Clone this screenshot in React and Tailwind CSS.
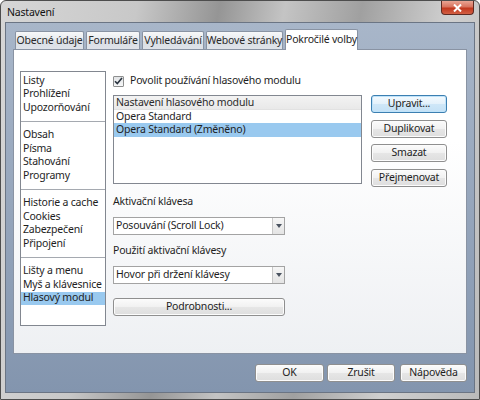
import React from 'react'

const ui = "font-['Noto_Sans',sans-serif] text-[10.5px] tracking-[-0.2px] whitespace-nowrap text-[#1e1e1e]"

const groups = [
  ['Listy', 'Prohlížení', 'Upozorňování'],
  ['Obsah', 'Písma', 'Stahování', 'Programy'],
  ['Historie a cache', 'Cookies', 'Zabezpečení', 'Připojení'],
  ['Lišty a menu', 'Myš a klávesnice', 'Hlasový modul'],
]

const tabs = [
  { label: 'Obecné údaje', w: 'w-[69px]' },
  { label: 'Formuláře', w: 'w-[54px]' },
  { label: 'Vyhledávání', w: 'w-[62px]' },
  { label: 'Webové stránky', w: 'w-[77px]' },
]

function Button({ children, className = '', focused }) {
  return (
    <div
      className={
        'flex items-center justify-center rounded-[3px] border ' +
        (focused
          ? 'border-[#3c7fb1] bg-[linear-gradient(#f4fafe,#e3f1fb_50%,#cfe7f8_51%,#c4e1f6)] shadow-[inset_0_0_0_1px_#bfe3fa] '
          : 'border-[#8f8f8f] bg-[linear-gradient(#fbfbfb,#f1f1f1_50%,#e6e6e6_51%,#dedede)] shadow-[inset_0_0_0_1px_#fcfcfc] ') +
        className
      }
    >
      {children}
    </div>
  )
}

function Select({ value }) {
  return (
    <div className="flex h-[18px] w-[172px] border border-[#a3a3a3] bg-white">
      <div className="flex flex-1 items-center pl-[2px]">{value}</div>
      <div className="flex w-[12px] items-center justify-center border-l border-[#c8c8c8] bg-[linear-gradient(#f6f6f6,#e4e4e4)]">
        <svg width="6" height="4" viewBox="0 0 6 4">
          <path d="M0 0h6L3 4z" fill="#4a5360" />
        </svg>
      </div>
    </div>
  )
}

export default function App() {
  return (
    <div className={'h-[400px] w-[480px] bg-white ' + ui}>
      <div className="flex h-full flex-col rounded-t-[6px] border border-[#4d4d4d] bg-[linear-gradient(100deg,#d6d6d6_0%,#c8c8c8_25%,#959595_40%,#c4c4c4_52%,#a0a0a0_66%,#cfcfcf_82%,#bababa_100%)]">
        {/* title bar */}
        <div className="flex h-[21px] items-start justify-between pl-[6px] pr-[5px]">
          <span className="mt-[4px] text-[#111]">Nastavení</span>
          <div className="flex h-[14px] w-[33px] items-center justify-center rounded-b-[4px] border border-t-0 border-[#5e2a22] bg-[linear-gradient(#e9a493,#d8735e_45%,#c1371d_55%,#d25f43)]">
            <svg width="9" height="8" viewBox="0 0 9 8">
              <path d="M1 0.5l7 7M8 0.5l-7 7" stroke="#fff" strokeWidth="2" />
            </svg>
          </div>
        </div>

        {/* client area */}
        <div className="mx-[4px] mb-[6px] flex flex-1 flex-col border border-[#6b7584] bg-[linear-gradient(#a8b6c9,#8395ae)] px-[7px] pt-[6px]">
          {/* tabs */}
          <div className="flex items-end gap-[2px] pl-[2px]">
            {tabs.map((t) => (
              <div
                key={t.label}
                className={
                  'flex h-[18px] items-center justify-center rounded-t-[2px] border border-b-0 border-[#8993a3] bg-[linear-gradient(#f7f8f9,#e6e9ee_50%,#d9dee5_51%,#dfe3e9)] text-[#2a2a2a] ' +
                  t.w
                }
              >
                {t.label}
              </div>
            ))}
            <div className="relative z-10 -mb-px flex h-[21px] w-[73px] items-center justify-center rounded-t-[2px] border border-b-0 border-[#8993a3] bg-white pb-[1px]">
              Pokročilé volby
            </div>
          </div>

          {/* panel */}
          <div className="flex h-[305px] border border-[#8993a3] bg-[linear-gradient(#ffffff,#ffffff_30%,#eef0f3)] pl-[6px] pt-[21px]">
            {/* left list */}
            <div className="flex h-[255px] w-[86px] flex-col border border-[#828790] bg-white">
              {groups.map((g, gi) => (
                <div
                  key={gi}
                  className={
                    (gi === 0 ? 'pt-[2px] ' : 'border-t border-[#a5a9b0] pt-[7px] ') + 'pb-[6px]'
                  }
                >
                  {g.map((item) => (
                    <div
                      key={item}
                      className={
                        'flex h-[13.5px] items-center pl-[2px] ' +
                        (item === 'Hlasový modul' ? 'bg-[#99c9ef]' : '')
                      }
                    >
                      {item}
                    </div>
                  ))}
                </div>
              ))}
            </div>

            {/* right column */}
            <div className="ml-[7px] flex flex-col">
              <div className="mt-[4px] flex h-[12px] items-center gap-[6px]">
                <div className="flex h-[11px] w-[11px] items-center justify-center rounded-[1px] border border-[#8e8f8f] bg-[linear-gradient(#e2e4e6,#f6f7f8)]">
                  <svg width="9" height="8" viewBox="0 0 9 8">
                    <path d="M1 4.2l2.3 2.4L8 1" fill="none" stroke="#2a3440" strokeWidth="1.6" />
                  </svg>
                </div>
                <span>Povolit používání hlasového modulu</span>
              </div>

              <div className="mt-[8px] flex gap-[9px]">
                <div className="h-[89px] w-[249px] border border-[#828790] bg-white">
                  <div className="flex h-[14px] items-center border-b border-[#e2e2e2] bg-[linear-gradient(#f3f3f3,#e9e9e9)] pl-[2px] text-[#2b2b2b]">
                    Nastavení hlasového modulu
                  </div>
                  <div className="flex h-[13px] items-center pl-[2px]">Opera Standard</div>
                  <div className="flex h-[14px] items-center bg-[#99c9ef] pl-[2px]">
                    Opera Standard (Změněno)
                  </div>
                </div>
                <div className="flex flex-col gap-[6.5px]">
                  <Button focused className="h-[18px] w-[76px]">Upravit...</Button>
                  <Button className="h-[18px] w-[76px]">Duplikovat</Button>
                  <Button className="h-[18px] w-[76px]">Smazat</Button>
                  <Button className="h-[18px] w-[76px]">Přejmenovat</Button>
                </div>
              </div>

              <div className="mt-[8px] flex h-[14px] items-center">Aktivační klávesa</div>
              <div className="mt-[8px]">
                <Select value="Posouvání (Scroll Lock)" />
              </div>
              <div className="mt-[9px] flex h-[14px] items-center">Použití aktivační klávesy</div>
              <div className="mt-[8px]">
                <Select value="Hovor při držení klávesy" />
              </div>
              <Button className="mt-[14px] h-[18px] w-[172px]">Podrobnosti...</Button>
            </div>
          </div>

          {/* dialog buttons */}
          <div className="mt-[10px] flex justify-end">
            <Button className="h-[18px] w-[69px]">OK</Button>
            <Button className="ml-[3px] h-[18px] w-[68px]">Zrušit</Button>
            <Button className="ml-[5px] h-[18px] w-[67px]">Nápověda</Button>
          </div>
        </div>
      </div>
    </div>
  )
}
